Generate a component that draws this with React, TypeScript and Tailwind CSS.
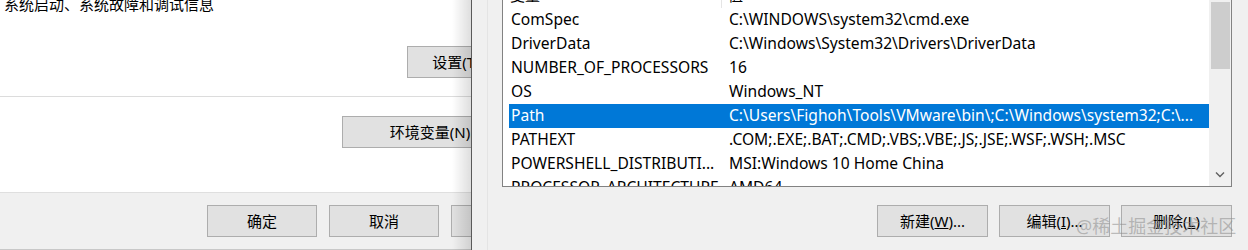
const rows = [
  ["ComSpec", "C:\\WINDOWS\\system32\\cmd.exe"],
  ["DriverData", "C:\\Windows\\System32\\Drivers\\DriverData"],
  ["NUMBER_OF_PROCESSORS", "16"],
  ["OS", "Windows_NT"],
  ["Path", "C:\\Users\\Fighoh\\Tools\\VMware\\bin\\;C:\\Windows\\system32;C:\\..."],
  ["PATHEXT", ".COM;.EXE;.BAT;.CMD;.VBS;.VBE;.JS;.JSE;.WSF;.WSH;.MSC"],
  ["POWERSHELL_DISTRIBUTI...", "MSI:Windows 10 Home China"],
  ["PROCESSOR_ARCHITECTURE", "AMD64"],
];

function WinButton({ label, className = "" }: { label: React.ReactNode; className?: string }) {
  return (
    <div
      className={`h-[32px] shrink-0 flex items-center justify-center bg-[#e1e1e1] border border-[#adadad] text-[15px] text-[#000] ${className}`}
    >
      {label}
    </div>
  );
}

export default function App() {
  return (
    <div
      className="relative flex w-[1248px] h-[250px] overflow-hidden bg-[#f0f0f0] text-black"
      style={{ fontFamily: '"Noto Sans", "Noto Sans CJK SC", sans-serif' }}
    >
      {/* system properties dialog behind */}
      <div className="w-[472px] shrink-0 h-full overflow-hidden flex flex-col bg-white border-r border-[#5a5a5a]">
        <div className="h-[97px] shrink-0 border-b border-[#dcdcdc] flex flex-col">
          <div className="-mt-[6px] pl-[4px] text-[15px] leading-[20px] whitespace-nowrap">
            系统启动、系统故障和调试信息
          </div>
          <div className="pl-[407px] mt-[32px] flex">
            <WinButton label="设置(T)..." className="w-[110px]" />
          </div>
        </div>
        <div className="h-[95px] shrink-0 pl-[342px] pt-[19px] flex">
          <WinButton label="环境变量(N)..." className="w-[188px]" />
        </div>
        <div className="flex-1 bg-[#f0f0f0] border-t border-[#dfdfdf] border-b border-b-[#c8c8c8] pl-[207px] pt-[12px] flex gap-[12px]">
          <WinButton label="确定" className="w-[110px]" />
          <WinButton label="取消" className="w-[110px]" />
          <WinButton label="应用(A)" className="w-[110px]" />
        </div>
      </div>
      <div className="absolute left-[452px] top-0 w-[19px] h-full bg-gradient-to-r from-transparent to-[rgba(0,0,0,0.13)]" />

      {/* environment variables dialog */}
      <div className="flex-1 flex">
        <div className="w-[16px] shrink-0 border-r border-[#e4e4e4]" />
        <div className="flex-1 pl-[14px] flex flex-col">
          <div className="w-[730px] h-[187px] shrink-0 bg-white border-r border-b border-l border-[#828282] flex overflow-hidden">
            <div className="flex-1 overflow-hidden flex flex-col">
              <div className="-mt-[16px] h-[24px] shrink-0 flex text-[15px] leading-[22px]">
                <div className="w-[219px] shrink-0 pl-[7px] border-r border-[#e5e5e5]">变量</div>
                <div className="pl-[6px]">值</div>
              </div>
              {rows.map(([name, value], i) => (
                <div
                  key={name}
                  className={`h-[24px] shrink-0 flex items-center text-[15.6px] whitespace-nowrap ml-[6px] ${
                    i === 4 ? "bg-[#0078d7] text-white" : ""
                  }`}
                >
                  <div className="w-[220px] shrink-0 pl-[2px]">{name}</div>
                  <div>{value}</div>
                </div>
              ))}
            </div>
            <div className="w-[22px] shrink-0 bg-[#f0f0f0] flex flex-col items-center pt-[2px] pb-[4px]">
              <div className="w-[19px] h-[67px] bg-[#cdcdcd]" />
              <div className="flex-1" />
              <svg width="10" height="7" viewBox="0 0 10 7" className="mb-[4px]">
                <path d="M1 1.5 L5 5.5 L9 1.5" fill="none" stroke="#606060" strokeWidth="1.4" />
              </svg>
            </div>
          </div>
          <div className="pl-[375px] pt-[18px] flex gap-[11px]">
            <WinButton
              label={
                <span>
                  新建(<span className="underline">W</span>)...
                </span>
              }
              className="w-[111px]"
            />
            <WinButton
              label={
                <span>
                  编辑(<span className="underline">I</span>)...
                </span>
              }
              className="w-[111px]"
            />
            <WinButton
              label={
                <span>
                  删除(<span className="underline">L</span>)
                </span>
              }
              className="w-[111px]"
            />
          </div>
        </div>
      </div>

      {/* watermark */}
      <div className="absolute left-[1076px] top-[215px] text-[18px] leading-[22px] text-[rgba(140,140,140,0.55)] whitespace-nowrap">
        @稀土掘金技术社区
      </div>
    </div>
  );
}
